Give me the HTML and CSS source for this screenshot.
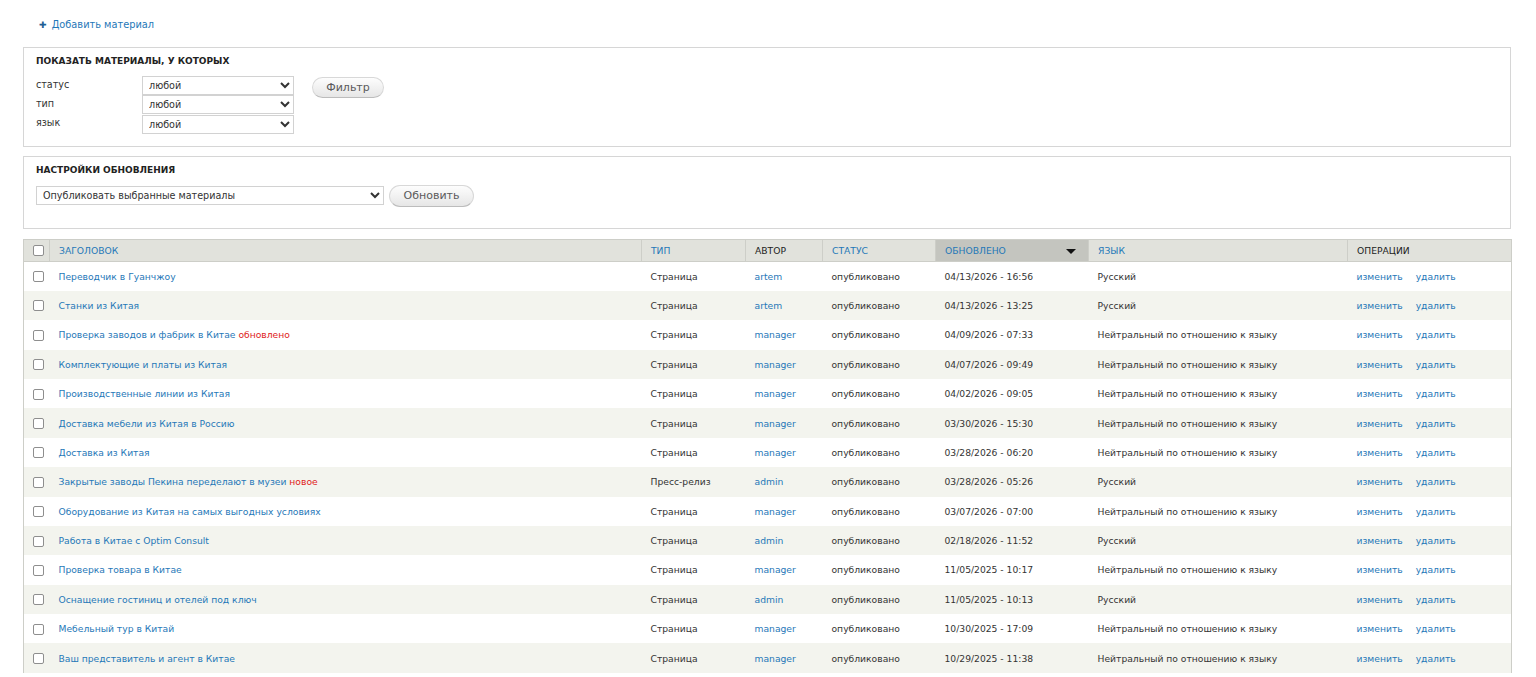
FILE: index.html
```html
<!DOCTYPE html>
<html lang="ru">
<head>
  <meta charset="UTF-8">
  <title>Материалы</title>
  <link rel="stylesheet" href="styles.css">
</head>
<body>
  <div class="page">

    <!-- Ссылка добавления -->
    <ul class="action-links">
      <li><a href="#"><span class="plus">&#10010;</span> Добавить материал</a></li>
    </ul>

    <!-- Фильтр -->
    <div class="fieldset filter">
      <div class="fieldset-title">Показать материалы, у которых</div>
      <div class="filter-body">
        <div class="filter-rows">
          <div class="filter-row">
            <label>статус</label>
            <select class="sel-small"><option>любой</option></select>
          </div>
          <div class="filter-row">
            <label>тип</label>
            <select class="sel-small"><option>любой</option></select>
          </div>
          <div class="filter-row">
            <label>язык</label>
            <select class="sel-small"><option>любой</option></select>
          </div>
        </div>
        <button class="btn btn-filter">Фильтр</button>
      </div>
    </div>

    <!-- Настройки обновления -->
    <div class="fieldset update">
      <div class="fieldset-title">Настройки обновления</div>
      <div class="update-body">
        <select class="sel-wide"><option>Опубликовать выбранные материалы</option></select>
        <button class="btn btn-update">Обновить</button>
      </div>
    </div>

    <!-- Таблица материалов -->
    <table class="content-table">
      <colgroup>
        <col class="c-check">
        <col class="c-title">
        <col class="c-type">
        <col class="c-author">
        <col class="c-status">
        <col class="c-changed">
        <col class="c-lang">
        <col class="c-ops">
      </colgroup>
      <thead>
        <tr>
          <th class="check"><input type="checkbox"></th>
          <th><a href="#">Заголовок</a></th>
          <th><a href="#">Тип</a></th>
          <th>Автор</th>
          <th><a href="#">Статус</a></th>
          <th class="active"><a href="#">Обновлено</a><span class="sort-arrow"></span></th>
          <th><a href="#">Язык</a></th>
          <th>Операции</th>
        </tr>
      </thead>
      <tbody>
        <tr class="odd">
          <td class="check"><input type="checkbox"></td>
          <td><a href="#">Переводчик в Гуанчжоу</a></td>
          <td>Страница</td>
          <td><a href="#">artem</a></td>
          <td>опубликовано</td>
          <td>04/13/2026 - 16:56</td>
          <td>Русский</td>
          <td class="ops"><a href="#">изменить</a><a href="#">удалить</a></td>
        </tr>
        <tr class="even">
          <td class="check"><input type="checkbox"></td>
          <td><a href="#">Станки из Китая</a></td>
          <td>Страница</td>
          <td><a href="#">artem</a></td>
          <td>опубликовано</td>
          <td>04/13/2026 - 13:25</td>
          <td>Русский</td>
          <td class="ops"><a href="#">изменить</a><a href="#">удалить</a></td>
        </tr>
        <tr class="odd">
          <td class="check"><input type="checkbox"></td>
          <td><a href="#">Проверка заводов и фабрик в Китае</a> <span class="marker">обновлено</span></td>
          <td>Страница</td>
          <td><a href="#">manager</a></td>
          <td>опубликовано</td>
          <td>04/09/2026 - 07:33</td>
          <td>Нейтральный по отношению к языку</td>
          <td class="ops"><a href="#">изменить</a><a href="#">удалить</a></td>
        </tr>
        <tr class="even">
          <td class="check"><input type="checkbox"></td>
          <td><a href="#">Комплектующие и платы из Китая</a></td>
          <td>Страница</td>
          <td><a href="#">manager</a></td>
          <td>опубликовано</td>
          <td>04/07/2026 - 09:49</td>
          <td>Нейтральный по отношению к языку</td>
          <td class="ops"><a href="#">изменить</a><a href="#">удалить</a></td>
        </tr>
        <tr class="odd">
          <td class="check"><input type="checkbox"></td>
          <td><a href="#">Производственные линии из Китая</a></td>
          <td>Страница</td>
          <td><a href="#">manager</a></td>
          <td>опубликовано</td>
          <td>04/02/2026 - 09:05</td>
          <td>Нейтральный по отношению к языку</td>
          <td class="ops"><a href="#">изменить</a><a href="#">удалить</a></td>
        </tr>
        <tr class="even">
          <td class="check"><input type="checkbox"></td>
          <td><a href="#">Доставка мебели из Китая в Россию</a></td>
          <td>Страница</td>
          <td><a href="#">manager</a></td>
          <td>опубликовано</td>
          <td>03/30/2026 - 15:30</td>
          <td>Нейтральный по отношению к языку</td>
          <td class="ops"><a href="#">изменить</a><a href="#">удалить</a></td>
        </tr>
        <tr class="odd">
          <td class="check"><input type="checkbox"></td>
          <td><a href="#">Доставка из Китая</a></td>
          <td>Страница</td>
          <td><a href="#">manager</a></td>
          <td>опубликовано</td>
          <td>03/28/2026 - 06:20</td>
          <td>Нейтральный по отношению к языку</td>
          <td class="ops"><a href="#">изменить</a><a href="#">удалить</a></td>
        </tr>
        <tr class="even">
          <td class="check"><input type="checkbox"></td>
          <td><a href="#">Закрытые заводы Пекина переделают в музеи</a> <span class="marker">новое</span></td>
          <td>Пресс-релиз</td>
          <td><a href="#">admin</a></td>
          <td>опубликовано</td>
          <td>03/28/2026 - 05:26</td>
          <td>Русский</td>
          <td class="ops"><a href="#">изменить</a><a href="#">удалить</a></td>
        </tr>
        <tr class="odd">
          <td class="check"><input type="checkbox"></td>
          <td><a href="#">Оборудование из Китая на самых выгодных условиях</a></td>
          <td>Страница</td>
          <td><a href="#">manager</a></td>
          <td>опубликовано</td>
          <td>03/07/2026 - 07:00</td>
          <td>Нейтральный по отношению к языку</td>
          <td class="ops"><a href="#">изменить</a><a href="#">удалить</a></td>
        </tr>
        <tr class="even">
          <td class="check"><input type="checkbox"></td>
          <td><a href="#">Работа в Китае с Optim Consult</a></td>
          <td>Страница</td>
          <td><a href="#">admin</a></td>
          <td>опубликовано</td>
          <td>02/18/2026 - 11:52</td>
          <td>Русский</td>
          <td class="ops"><a href="#">изменить</a><a href="#">удалить</a></td>
        </tr>
        <tr class="odd">
          <td class="check"><input type="checkbox"></td>
          <td><a href="#">Проверка товара в Китае</a></td>
          <td>Страница</td>
          <td><a href="#">manager</a></td>
          <td>опубликовано</td>
          <td>11/05/2025 - 10:17</td>
          <td>Нейтральный по отношению к языку</td>
          <td class="ops"><a href="#">изменить</a><a href="#">удалить</a></td>
        </tr>
        <tr class="even">
          <td class="check"><input type="checkbox"></td>
          <td><a href="#">Оснащение гостиниц и отелей под ключ</a></td>
          <td>Страница</td>
          <td><a href="#">admin</a></td>
          <td>опубликовано</td>
          <td>11/05/2025 - 10:13</td>
          <td>Русский</td>
          <td class="ops"><a href="#">изменить</a><a href="#">удалить</a></td>
        </tr>
        <tr class="odd">
          <td class="check"><input type="checkbox"></td>
          <td><a href="#">Мебельный тур в Китай</a></td>
          <td>Страница</td>
          <td><a href="#">manager</a></td>
          <td>опубликовано</td>
          <td>10/30/2025 - 17:09</td>
          <td>Нейтральный по отношению к языку</td>
          <td class="ops"><a href="#">изменить</a><a href="#">удалить</a></td>
        </tr>
        <tr class="even">
          <td class="check"><input type="checkbox"></td>
          <td><a href="#">Ваш представитель и агент в Китае</a></td>
          <td>Страница</td>
          <td><a href="#">manager</a></td>
          <td>опубликовано</td>
          <td>10/29/2025 - 11:38</td>
          <td>Нейтральный по отношению к языку</td>
          <td class="ops"><a href="#">изменить</a><a href="#">удалить</a></td>
        </tr>
      </tbody>
    </table>

  </div>
</body>
</html>
```

FILE: styles.css
```css
/* Базовые стили */
* {
  box-sizing: border-box;
}

body {
  margin: 0;
  background: #fff;
  color: #333;
  font-family: "DejaVu Sans", Verdana, sans-serif;
  font-size: 10px;
}

a {
  color: #1f78b8;
  text-decoration: none;
}

.page {
  padding: 18px 25px 0 23px;
}

/* Ссылка "Добавить материал" */
.action-links {
  list-style: none;
  margin: 0 0 15px;
  padding: 0 0 0 16px;
  line-height: 14px;
  font-size: 9.8px;
}

.action-links .plus {
  color: #1f5f95;
  font-size: 9px;
  margin-right: 2px;
}

/* Блоки-фиелдсеты */
.fieldset {
  border: 1px solid #d6d6d6;
  padding: 6px 12px 12px;
  margin-bottom: 9px;
}

.fieldset-title {
  font-weight: bold;
  text-transform: uppercase;
  line-height: 14px;
  color: #222;
  font-size: 9px;
}

.filter-body {
  display: flex;
  align-items: flex-start;
  margin-top: 8px;
}

.filter-row {
  display: flex;
  align-items: center;
  height: 19.3px;
}

.filter-row label {
  width: 106px;
  margin-top: -3px;
  font-size: 9.6px;
}

select {
  font-family: "DejaVu Sans", Verdana, sans-serif;
  font-size: 9.6px;
  color: #333;
  background: #fff;
  border: 1px solid #d2d2d2;
  border-radius: 0;
  padding: 0 2px;
  height: 19px;
}

.sel-small {
  width: 152px;
}

.sel-wide {
  width: 348px;
}

/* Кнопки */
.btn {
  font-family: "DejaVu Sans", Verdana, sans-serif;
  font-size: 11px;
  color: #5a5a5a;
  background: linear-gradient(#fdfdfd, #e6e6e6);
  border: 1px solid #d8d8d8;
  border-bottom-color: #bcbcbc;
  border-radius: 12px;
  padding: 0;
  cursor: pointer;
}

.btn-filter {
  width: 72px;
  height: 21px;
  margin: 1px 0 0 18px;
}

.update {
  padding-bottom: 21px;
}

.update-body {
  display: flex;
  align-items: center;
  margin-top: 8px;
}

.btn-update {
  width: 85px;
  height: 22px;
  margin-left: 5px;
}

/* Таблица материалов */
.content-table {
  width: 100%;
  table-layout: fixed;
  border-collapse: collapse;
  margin-top: 10px;
  font-size: 9.2px;
}

.c-check { width: 26px; }
.c-title { width: 592px; }
.c-type { width: 104px; }
.c-author { width: 77px; }
.c-status { width: 113px; }
.c-changed { width: 153px; }
.c-lang { width: 259px; }
.c-ops { width: 164px; }

.content-table th {
  background: #e1e2dc;
  border: 1px solid #cdcec8;
  height: 22px;
  padding: 0 9px;
  text-align: left;
  font-weight: normal;
  text-transform: uppercase;
  color: #222;
  white-space: nowrap;
}

.content-table th.active {
  background: #c4c5bf;
  position: relative;
}

.sort-arrow {
  position: absolute;
  right: 12px;
  top: 9px;
  border-left: 5px solid transparent;
  border-right: 5px solid transparent;
  border-top: 5px solid #111;
}

.content-table td {
  height: 29.4px;
  padding: 0 9px;
  white-space: nowrap;
  overflow: hidden;
}

.content-table tbody tr {
  border-left: 1px solid #cdcec8;
  border-right: 1px solid #cdcec8;
}

tr.odd {
  background: #fff;
}

tr.even {
  background: #f3f4ee;
}

.content-table .check {
  padding: 0 0 0 9px;
}

.content-table input[type="checkbox"] {
  appearance: none;
  width: 11px;
  height: 11px;
  margin: 0;
  vertical-align: middle;
  background: #fff;
  border: 1px solid #8e8e8e;
  border-radius: 2px;
}

.marker {
  color: #e01b1b;
}

.ops a {
  margin-right: 13px;
}
```
